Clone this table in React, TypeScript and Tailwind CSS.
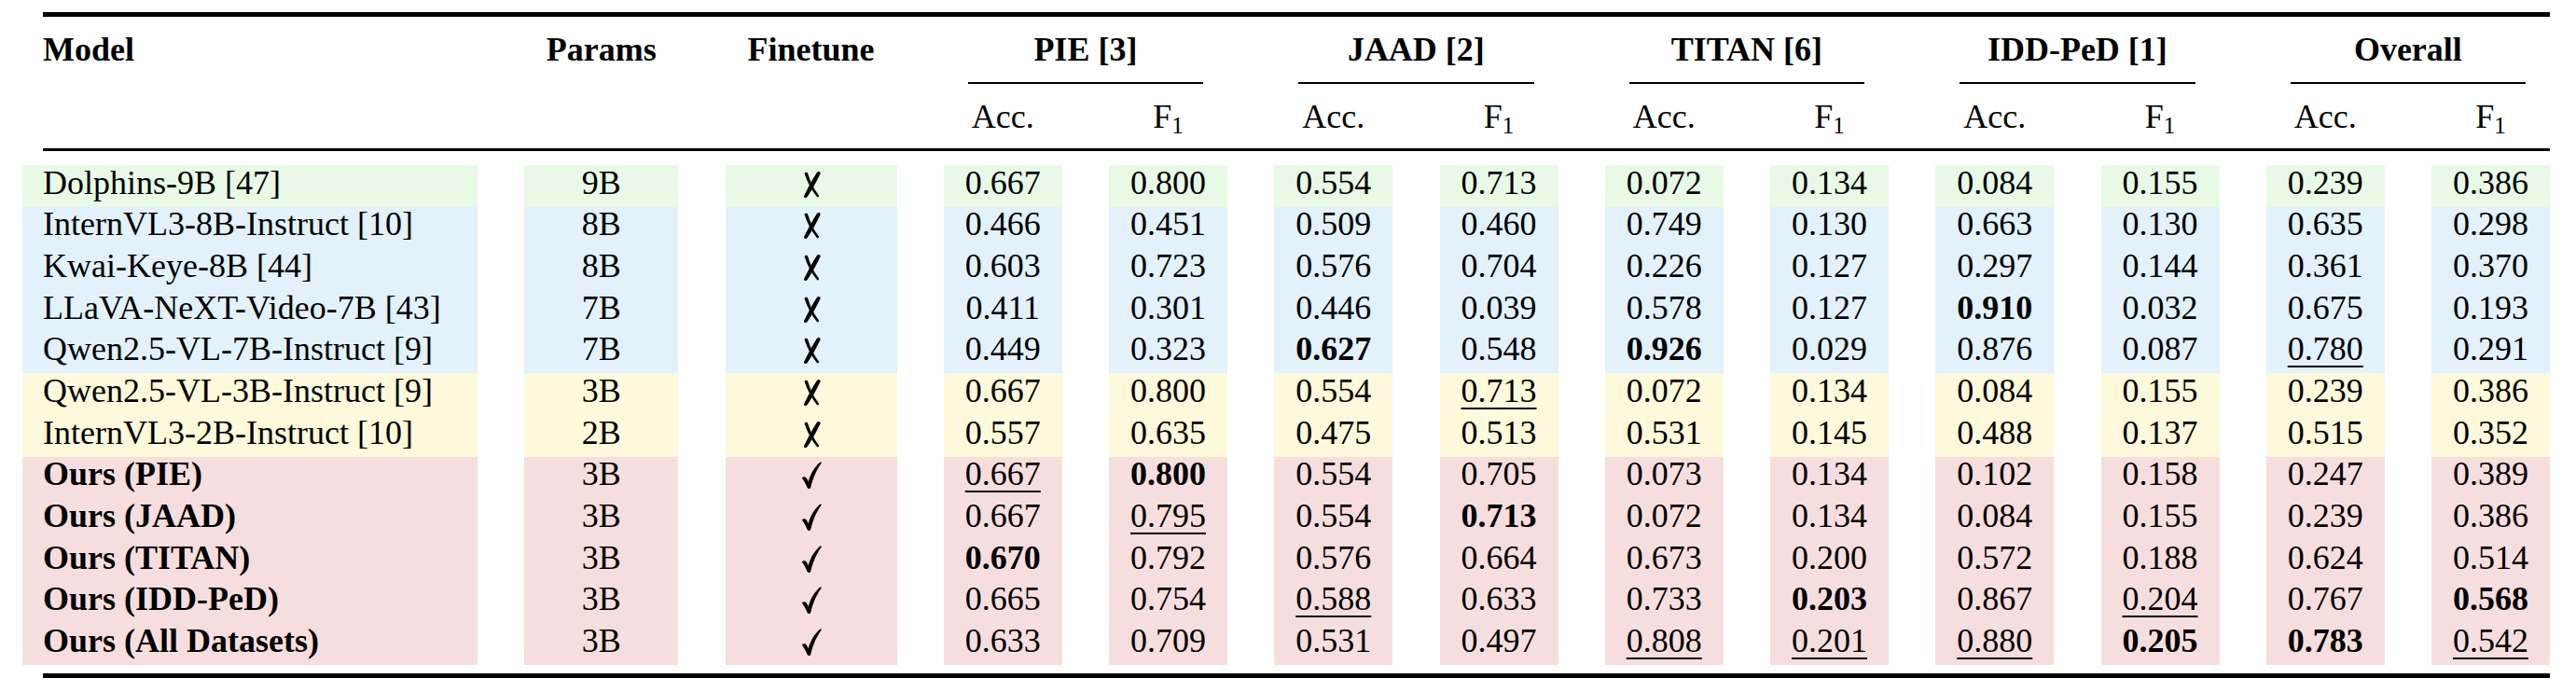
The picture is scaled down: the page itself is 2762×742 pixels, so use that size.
import type { ReactNode } from "react";

type Fmt = "b" | "u" | "";
type Row = {
  model: string;
  ours?: boolean;
  params: string;
  ft: boolean;
  bg: string;
  vals: Array<[string, Fmt]>;
};

const v = (s: string): Array<[string, Fmt]> =>
  s.split(" ").map((t) => {
    if (t.startsWith("*")) return [t.slice(1), "b"];
    if (t.startsWith("_")) return [t.slice(1), "u"];
    return [t, ""];
  });

const GREEN = "bg-[#e8fae6]";
const BLUE = "bg-[#e2f1fa]";
const YELLOW = "bg-[#fef9db]";
const PINK = "bg-[#f6dede]";

const rows: Row[] = [
  { model: "Dolphins-9B [47]", params: "9B", ft: false, bg: GREEN, vals: v("0.667 0.800 0.554 0.713 0.072 0.134 0.084 0.155 0.239 0.386") },
  { model: "InternVL3-8B-Instruct [10]", params: "8B", ft: false, bg: BLUE, vals: v("0.466 0.451 0.509 0.460 0.749 0.130 0.663 0.130 0.635 0.298") },
  { model: "Kwai-Keye-8B [44]", params: "8B", ft: false, bg: BLUE, vals: v("0.603 0.723 0.576 0.704 0.226 0.127 0.297 0.144 0.361 0.370") },
  { model: "LLaVA-NeXT-Video-7B [43]", params: "7B", ft: false, bg: BLUE, vals: v("0.411 0.301 0.446 0.039 0.578 0.127 *0.910 0.032 0.675 0.193") },
  { model: "Qwen2.5-VL-7B-Instruct [9]", params: "7B", ft: false, bg: BLUE, vals: v("0.449 0.323 *0.627 0.548 *0.926 0.029 0.876 0.087 _0.780 0.291") },
  { model: "Qwen2.5-VL-3B-Instruct [9]", params: "3B", ft: false, bg: YELLOW, vals: v("0.667 0.800 0.554 _0.713 0.072 0.134 0.084 0.155 0.239 0.386") },
  { model: "InternVL3-2B-Instruct [10]", params: "2B", ft: false, bg: YELLOW, vals: v("0.557 0.635 0.475 0.513 0.531 0.145 0.488 0.137 0.515 0.352") },
  { model: "Ours (PIE)", ours: true, params: "3B", ft: true, bg: PINK, vals: v("_0.667 *0.800 0.554 0.705 0.073 0.134 0.102 0.158 0.247 0.389") },
  { model: "Ours (JAAD)", ours: true, params: "3B", ft: true, bg: PINK, vals: v("0.667 _0.795 0.554 *0.713 0.072 0.134 0.084 0.155 0.239 0.386") },
  { model: "Ours (TITAN)", ours: true, params: "3B", ft: true, bg: PINK, vals: v("*0.670 0.792 0.576 0.664 0.673 0.200 0.572 0.188 0.624 0.514") },
  { model: "Ours (IDD-PeD)", ours: true, params: "3B", ft: true, bg: PINK, vals: v("0.665 0.754 _0.588 0.633 0.733 *0.203 0.867 _0.204 0.767 *0.568") },
  { model: "Ours (All Datasets)", ours: true, params: "3B", ft: true, bg: PINK, vals: v("0.633 0.709 0.531 0.497 _0.808 _0.201 _0.880 *0.205 *0.783 _0.542") },
];

const groups = ["PIE [3]", "JAAD [2]", "TITAN [6]", "IDD-PeD [1]", "Overall"];

const cols = "grid grid-cols-[488px_165px_184px_repeat(10,127px)] gap-x-[50.25px]";

function Cell({ bg, children, left }: { bg: string; children: ReactNode; left?: boolean }) {
  return (
    <div className={`${bg} flex items-center pb-[7px] leading-[36px] ${left ? "pl-[22px]" : "justify-center"}`}>
      {children}
    </div>
  );
}

function F1() {
  return (
    <span>
      F<span className="relative top-[6px] text-[25px]">1</span>
    </span>
  );
}

// ZapfDingbats-like marks
function Check() {
  return (
    <svg width="22" height="30" viewBox="0 0 22 30" className="mt-[4px]">
      <path
        d="M0.8 17.6 C2.6 15.4 5.4 15.8 6.7 19.2 L7.6 21.4 C10 13 14.5 5.5 20.4 0.6 C21.2 0.1 22.2 0.9 21.6 1.7 C16.6 8.4 12.6 17.4 10.3 27.4 C9.9 29.2 7.6 29.6 6.7 28 C5 24.5 3.4 20.6 0.8 17.6 Z"
        fill="black"
      />
    </svg>
  );
}

function Cross() {
  return (
    <svg width="22" height="30" viewBox="0 0 22 30" className="mt-[4px]">
      <path
        d="M17 1.8 C18.3 0.2 21.2 1 20.5 3.2 C16.8 11.5 11.5 20.5 6.6 28 C5.4 29.8 2.4 29.2 3.1 27 C7 18.8 12 9.5 17 1.8 Z"
        fill="black"
      />
      <path
        d="M3.6 3.2 C4 1.3 6.6 1.2 7.2 3 C9.6 11 13.2 19 18.8 26.2 C19.6 27.6 18.2 29.2 16.9 28.1 C11.2 21.2 6.6 12.2 3.6 3.2 Z"
        fill="black"
      />
    </svg>
  );
}

export default function App() {
  return (
    <div className="min-h-[742px] w-[2762px] bg-white pl-[24px] pt-[13px] text-[36px] text-black" style={{ fontFamily: '"Liberation Serif", "Times New Roman", serif' }}>
      <div className="w-[2710px]">
        {/* top rule */}
        <div className="ml-[22px] h-[5px] bg-black" />

        {/* header */}
        <div className={`${cols} grid-rows-[70px_2px_69px] leading-[36px]`}>
          <div className="pl-[22px] pt-[17px] font-bold">Model</div>
          <div className="pt-[17px] text-center font-bold">Params</div>
          <div className="pt-[17px] text-center font-bold">Finetune</div>
          {groups.map((g) => (
            <div key={g} className="col-span-2 pt-[17px] text-center font-bold">
              {g}
            </div>
          ))}

          <div />
          <div />
          <div />
          {groups.map((g) => (
            <div key={g + "-rule"} className="col-span-2 mx-[26px] bg-black" />
          ))}

          <div />
          <div />
          <div />
          {groups.flatMap((g) => [
            <div key={g + "-acc"} className="pt-[17px] text-center">Acc.</div>,
            <div key={g + "-f1"} className="pt-[17px] text-center"><F1 /></div>,
          ])}
        </div>

        {/* mid rule */}
        <div className="ml-[22px] h-[3px] bg-black" />

        {/* body */}
        <div className={`${cols} mt-[15px] h-[536px] grid-rows-12`}>
          {rows.map((r) => [
            <Cell key={r.model} bg={r.bg} left>
              <span className={r.ours ? "font-bold" : ""}>{r.model}</span>
            </Cell>,
            <Cell key={r.model + "-p"} bg={r.bg}>{r.params}</Cell>,
            <Cell key={r.model + "-f"} bg={r.bg}>
              {r.ft ? <Check /> : <Cross />}
            </Cell>,
            ...r.vals.map(([t, f], i) => (
              <Cell key={r.model + i} bg={r.bg}>
                <span
                  className={
                    f === "b"
                      ? "font-bold"
                      : f === "u"
                      ? "underline decoration-[2px] underline-offset-[6px]"
                      : ""
                  }
                >
                  {t}
                </span>
              </Cell>
            )),
          ])}
        </div>

        {/* bottom rule */}
        <div className="ml-[22px] mt-[9px] h-[5px] bg-black" />
      </div>
    </div>
  );
}
